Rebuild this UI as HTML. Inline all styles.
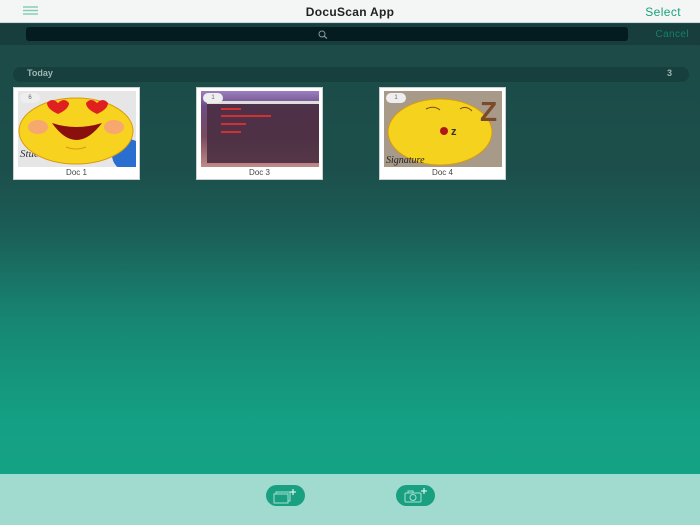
<!DOCTYPE html>
<html><head><meta charset="utf-8">
<style>
*{margin:0;padding:0;box-sizing:border-box}
body{width:700px;height:525px;overflow:hidden;font-family:"Liberation Sans",sans-serif;position:relative;
background:linear-gradient(#1d4946 0px,#1c4f4b 170px,#1b5d57 230px,#178672 320px,#14a084 420px,#14a285 474px)}
.hdr{position:absolute;left:0;top:0;width:700px;height:23px;background:#f4f6f6;border-bottom:1px solid #cfd6d5}
.hdr .t{position:absolute;left:0;width:700px;text-align:center;top:5px;font-size:12px;font-weight:bold;color:#222;letter-spacing:.3px}
.hdr .s{position:absolute;right:19px;top:5px;font-size:12px;color:#1aa07c;letter-spacing:.4px}
.sb{position:absolute;left:0;top:24px;width:700px;height:21px;background:#173d3c}
.sf{position:absolute;left:26px;top:3px;width:602px;height:14px;border-radius:3px;background:#041b20}
.cancel{position:absolute;right:11px;top:5px;font-size:10px;color:#16806a;letter-spacing:.4px}
.sec{position:absolute;left:13px;top:67px;width:676px;height:15px;border-radius:8px;background:#163f3d}
.sec .a{position:absolute;left:14px;top:1px;font-size:9px;font-weight:bold;color:#9fb6b2}
.sec .b{position:absolute;right:17px;top:1px;font-size:9px;font-weight:bold;color:#9fb6b2}
.card{position:absolute;top:87px;width:127px;height:93px;background:#fff;border:1px solid #c9cfcf}
.card .img{position:absolute;left:4px;top:3px;width:118px;height:76px;overflow:hidden}
.card .lb{position:absolute;left:0;width:100%;top:80px;text-align:center;font-size:8px;color:#444}
.badge{position:absolute;left:2px;top:2px;width:20px;height:10px;border-radius:5px;background:#eee;font-size:6px;color:#666;text-align:center;line-height:10px}
.bot{position:absolute;left:0;top:474px;width:700px;height:51px;background:#a1dbd0}
.btn{position:absolute;top:485px;width:39px;height:21px;border-radius:11px;background:#18a080}
</style></head><body>
<div class="hdr">
<svg style="position:absolute;left:23px;top:6px" width="15" height="9"><g stroke="#7fcbb5" stroke-width="1.4"><line x1="0" y1="1" x2="15" y2="1"/><line x1="0" y1="4.5" x2="15" y2="4.5"/><line x1="0" y1="8" x2="15" y2="8"/></g></svg>
<div class="t">DocuScan App</div><div class="s">Select</div></div>
<div class="sb"><div class="sf"><svg style="position:absolute;left:292px;top:3px" width="10" height="9"><circle cx="4" cy="4" r="3" stroke="#8a9a9a" fill="none" stroke-width="1"/><line x1="6.2" y1="6.2" x2="9" y2="8.5" stroke="#8a9a9a" stroke-width="1.2"/></svg></div><div class="cancel">Cancel</div></div>
<div class="sec"><span class="a">Today</span><span class="b">3</span></div>

<div class="card" style="left:13px"><div class="img" style="background:#e6e6e6">
<svg width="118" height="76"><circle cx="110" cy="64" r="16" fill="#2a6fd0"/><text x="2" y="66" font-size="11" font-family="Liberation Serif" fill="#333" font-style="italic">Stue</text>
<ellipse cx="58" cy="40" rx="57" ry="33" fill="#f7d21e" stroke="#d89a10"/><ellipse cx="20" cy="36" rx="10" ry="7" fill="#f59a8a" opacity=".75"/><ellipse cx="96" cy="36" rx="10" ry="7" fill="#f59a8a" opacity=".75"/>
<path d="M40 12 q-6-6-11 0 q0 6 11 11 q11-5 11-11 q-5-6-11 0z" fill="#e02020"/><path d="M79 12 q-6-6-11 0 q0 6 11 11 q11-5 11-11 q-5-6-11 0z" fill="#e02020"/>
<path d="M34 32 Q58 66 84 32 Q58 40 34 32z" fill="#8a1010"/><path d="M48 56 q10 4 20 0" stroke="#d89a10" fill="none"/></svg>
<div class="badge">6</div></div><div class="lb">Doc 1</div></div>

<div class="card" style="left:196px"><div class="img" style="background:linear-gradient(#9a7fc0,#6c4c84 20%,#7a4a5e 60%,#c08a88)">
<div style="position:absolute;left:6px;top:12px;width:112px;height:60px;background:#4a2f42;opacity:.9"></div>
<div style="position:absolute;left:6px;top:10px;width:112px;height:3px;background:#ddd"></div>
<div style="position:absolute;left:20px;top:17px;width:20px;height:2px;background:#d03030"></div>
<div style="position:absolute;left:20px;top:24px;width:50px;height:2px;background:#d03030"></div>
<div style="position:absolute;left:20px;top:32px;width:25px;height:2px;background:#d03030"></div>
<div style="position:absolute;left:20px;top:40px;width:20px;height:2px;background:#d03030"></div>
<div class="badge">1</div></div><div class="lb">Doc 3</div></div>

<div class="card" style="left:379px"><div class="img" style="background:#a89a88">
<svg width="118" height="76"><ellipse cx="56" cy="41" rx="52" ry="33" fill="#f5d21e" stroke="#d89a10"/><text x="96" y="30" font-size="28" font-weight="bold" fill="#7a4a2a">Z</text>
<circle cx="60" cy="40" r="4" fill="#b01818"/><text x="67" y="44" font-size="11" font-weight="bold" fill="#333">z</text>
<path d="M42 18 q8 -4 14 1" stroke="#7a4a10" fill="none"/><path d="M76 18 q6 -4 12 2" stroke="#7a4a10" fill="none"/>
<text x="2" y="72" font-size="10" font-family="Liberation Serif" font-style="italic" fill="#222">Signature</text></svg>
<div class="badge">1</div></div><div class="lb">Doc 4</div></div>

<div class="bot"></div>
<div class="btn" style="left:266px"><svg width="39" height="21"><g stroke="#a8e0d2" stroke-width="1" fill="none"><rect x="10" y="7" width="14" height="9"/><rect x="8" y="9" width="14" height="9" fill="#18a080"/><path d="M27 4v6M24 7h6" stroke="#fff"/></g></svg></div>
<div class="btn" style="left:396px"><svg width="39" height="21"><g stroke="#a8e0d2" stroke-width="1" fill="none"><rect x="9" y="8" width="16" height="9" rx="1"/><rect x="12" y="6" width="5" height="2"/><circle cx="17" cy="12.5" r="3"/><path d="M28 3v6M25 6h6" stroke="#fff"/></g></svg></div>
</body></html>
